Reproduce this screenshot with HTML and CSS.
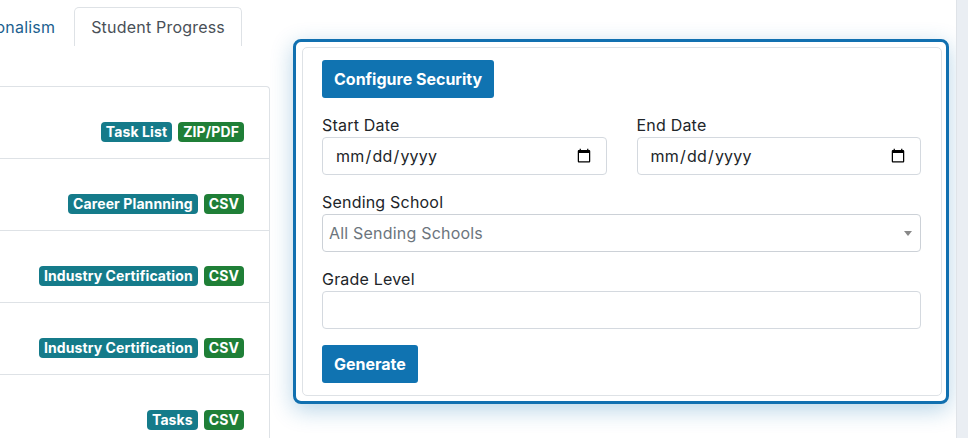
FILE: index.html
```html
<!DOCTYPE html>
<html>
<head>
    <meta charset="utf-8">
    <link rel="stylesheet" href="styles.css">
</head>
<body>
    <div class="page">
        <div class="reports">
            <ul class="tabs">
                <li class="tab">Professionalism</li>
                <li class="tab active">Student Progress</li>
            </ul>
            <div class="report-list">
                <div class="report-row">
                    <span class="badge type">Task List</span>
                    <span class="badge format">ZIP/PDF</span>
                </div>
                <div class="report-row">
                    <span class="badge type">Career Plannning</span>
                    <span class="badge format">CSV</span>
                </div>
                <div class="report-row">
                    <span class="badge type">Industry Certification</span>
                    <span class="badge format">CSV</span>
                </div>
                <div class="report-row">
                    <span class="badge type">Industry Certification</span>
                    <span class="badge format">CSV</span>
                </div>
                <div class="report-row">
                    <span class="badge type">Tasks</span>
                    <span class="badge format">CSV</span>
                </div>
            </div>
        </div>

        <div class="panel">
            <div class="panel-card">
                <button class="btn">Configure Security</button>
                <div class="field-row">
                    <div class="field">
                        <label for="start">Start Date</label>
                        <input id="start" class="input" type="date">
                    </div>
                    <div class="field">
                        <label for="end">End Date</label>
                        <input id="end" class="input" type="date">
                    </div>
                </div>
                <div class="field">
                    <label>Sending School</label>
                    <div class="select-box">
                        <span class="placeholder">All Sending Schools</span>
                        <span class="caret"></span>
                    </div>
                </div>
                <div class="field">
                    <label for="grade">Grade Level</label>
                    <input id="grade" class="input" type="text">
                </div>
                <button class="btn generate">Generate</button>
            </div>
        </div>

        <div class="side-strip"></div>
    </div>
</body>
</html>
```

FILE: styles.css
```css
body {
    margin: 0;
    font-family: Inter, "Open Sans", sans-serif;
    font-size: 16px;
    letter-spacing: 0.2px;
    color: #212529;
    background: white;
}
.page {
    display: flex;
    height: 438px;
    overflow: hidden;
}
.reports {
    width: 270px;
    flex-shrink: 0;
    overflow: hidden;
}
.tabs {
    list-style: none;
    margin: 7px 0 0 0;
    padding: 0 28px 0 0;
    display: flex;
    justify-content: flex-end;
    gap: 2px;
}
.tab {
    flex-shrink: 0;
    padding: 8px 16px;
    line-height: 22px;
    color: #1c5f8f;
    border: 1px solid transparent;
    border-bottom: none;
    border-radius: 5px 5px 0 0;
}
.tab.active {
    color: #495057;
    border-color: #dee2e6;
}
.report-list {
    margin-top: 40px;
    border-top: 1px solid #dee2e6;
    border-right: 1px solid #dee2e6;
    border-top-right-radius: 4px;
}
.report-row {
    height: 72px;
    box-sizing: border-box;
    border-bottom: 1px solid #dee2e6;
    display: flex;
    align-items: flex-end;
    justify-content: flex-end;
    gap: 6px;
    padding: 0 25px 16px 0;
}
.badge {
    height: 20px;
    line-height: 20px;
    padding: 0 5px;
    border-radius: 4px;
    font-size: 14px;
    font-weight: 700;
    letter-spacing: 0.1px;
    color: white;
    white-space: nowrap;
}
.badge.type {
    background: #157b8a;
}
.badge.format {
    background: #1f7f37;
}
.panel {
    width: 640px;
    height: 349px;
    flex-shrink: 0;
    margin: 39px 0 0 23px;
    padding: 5px 4px 5px 6px;
    border: 3px solid #1170b0;
    border-radius: 8px;
    box-shadow: 0 6px 22px rgba(17, 112, 176, 0.3);
    background: white;
}
.panel-card {
    height: 100%;
    box-sizing: border-box;
    padding: 12px 20px 12px 19px;
    border: 1px solid #dee2e6;
    border-radius: 5px;
}
.btn {
    display: block;
    height: 38px;
    padding: 0 12px;
    border: none;
    border-radius: 3px;
    background: #1073b1;
    color: white;
    font-family: inherit;
    font-size: 16px;
    font-weight: 700;
    letter-spacing: 0;
}
.btn.generate {
    margin-top: 16px;
}
.field-row {
    display: grid;
    grid-template-columns: 1fr 1fr;
    gap: 30px;
    margin-top: 16px;
}
.field {
    margin-top: 16px;
}
.field-row .field {
    margin-top: 0;
}
.field label {
    display: block;
    line-height: 22px;
    margin-bottom: 1px;
}
.input {
    display: block;
    width: 100%;
    height: 38px;
    box-sizing: border-box;
    padding: 6px 12px;
    border: 1px solid #d4d9df;
    border-radius: 4px;
    font-family: inherit;
    font-size: 16px;
    letter-spacing: 0.2px;
    color: #212529;
}
.select-box {
    height: 38px;
    box-sizing: border-box;
    border: 1px solid #ccd1d7;
    border-radius: 4px;
    display: flex;
    align-items: center;
    justify-content: space-between;
    padding: 0 8px 0 6px;
}
.placeholder {
    color: #6c757d;
}
.caret {
    border-left: 4px solid transparent;
    border-right: 4px solid transparent;
    border-top: 5px solid #888;
}
.side-strip {
    flex: 1;
    margin-left: 7px;
    background: #eaeef3;
    border-left: 1px solid #dfe3e8;
}
```
